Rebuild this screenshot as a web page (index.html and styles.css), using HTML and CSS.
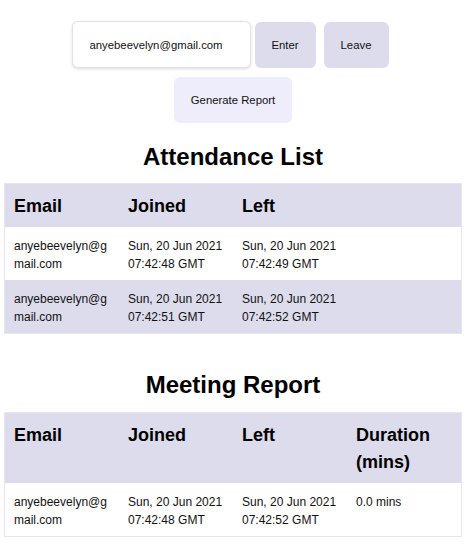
FILE: index.html
```html
<!DOCTYPE html>
<html>
<head>
<meta charset="utf-8">
<link rel="stylesheet" href="styles.css">
</head>
<body>
<div class="page">
  <div class="controls">
    <input class="email-input" type="text" value="anyebeevelyn@gmail.com">
    <button class="btn btn-enter">Enter</button>
    <button class="btn btn-leave">Leave</button>
  </div>
  <div class="controls controls-report">
    <button class="btn btn-report">Generate Report</button>
  </div>

  <section class="section">
    <h2 class="title">Attendance List</h2>
    <table class="table">
      <colgroup><col class="c"><col class="c"><col class="c"><col class="c"></colgroup>
      <thead>
        <tr><th>Email</th><th>Joined</th><th>Left</th><th></th></tr>
      </thead>
      <tbody>
        <tr><td>anyebeevelyn@gmail.com</td><td>Sun, 20 Jun 2021 07:42:48 GMT</td><td>Sun, 20 Jun 2021 07:42:49 GMT</td><td></td></tr>
        <tr class="alt"><td>anyebeevelyn@gmail.com</td><td>Sun, 20 Jun 2021 07:42:51 GMT</td><td>Sun, 20 Jun 2021 07:42:52 GMT</td><td></td></tr>
      </tbody>
    </table>
  </section>

  <section class="section">
    <h2 class="title">Meeting Report</h2>
    <table class="table">
      <colgroup><col class="c"><col class="c"><col class="c"><col class="c"></colgroup>
      <thead>
        <tr><th>Email</th><th>Joined</th><th>Left</th><th>Duration (mins)</th></tr>
      </thead>
      <tbody>
        <tr><td>anyebeevelyn@gmail.com</td><td>Sun, 20 Jun 2021 07:42:48 GMT</td><td>Sun, 20 Jun 2021 07:42:52 GMT</td><td>0.0 mins</td></tr>
      </tbody>
    </table>
  </section>
</div>
</body>
</html>
```

FILE: styles.css
```css
html, body {
  margin: 0;
  padding: 0;
  background: #ffffff;
}
body {
  font-family: "Liberation Sans", Arial, sans-serif;
  color: #111;
}
.page {
  width: 458px;
  padding: 21px 9px 0 4px;
}
.controls {
  display: flex;
  justify-content: center;
  align-items: stretch;
  padding-right: 6px;
}
.controls-report {
  margin-top: 9px;
  padding-right: 0;
  padding-left: 0;
}
.email-input {
  box-sizing: border-box;
  width: 179px;
  height: 47px;
  margin: 0 4px 0 0;
  padding: 0 0 0 17px;
  border: 1px solid #e2e2e6;
  border-radius: 6px;
  box-shadow: 0 1px 3px rgba(0, 0, 0, 0.14);
  font-family: "Liberation Sans", Arial, sans-serif;
  font-size: 11.33px;
  color: #111;
  background: #fff;
  outline: none;
}
.btn {
  box-sizing: border-box;
  height: 46px;
  margin: 1px 0 0 0;
  padding: 0;
  border: none;
  border-radius: 6px;
  font-family: "Liberation Sans", Arial, sans-serif;
  font-size: 11.33px;
  color: #111;
  background: #dddcec;
}
.btn-enter {
  width: 61px;
  margin-right: 8px;
}
.btn-leave {
  width: 65px;
}
.btn-report {
  width: 118px;
  margin: 0;
  background: #eeedfc;
}
.section + .section {
  margin-top: 37px;
}
.title {
  margin: 20px 0 12px;
  font-size: 24px;
  line-height: 28px;
  font-weight: bold;
  text-align: center;
  color: #000;
}
.section + .section .title {
  margin-top: 0;
  margin-bottom: 13px;
}
.table {
  width: 458px;
  table-layout: fixed;
  border-collapse: separate;
  border-spacing: 0;
  border: 1px solid #e7e6ef;
}
.table col.c {
  width: 114px;
}
.table th {
  padding: 9px 9px 7px;
  font-size: 18px;
  line-height: 27px;
  font-weight: bold;
  text-align: left;
  vertical-align: top;
  background: #dddcec;
  color: #000;
}
.table td {
  padding: 10px 9px 7px;
  font-size: 12px;
  line-height: 18px;
  vertical-align: top;
  color: #111;
  word-break: break-all;
}
.table tr.alt td {
  background: #dddcec;
}
```
